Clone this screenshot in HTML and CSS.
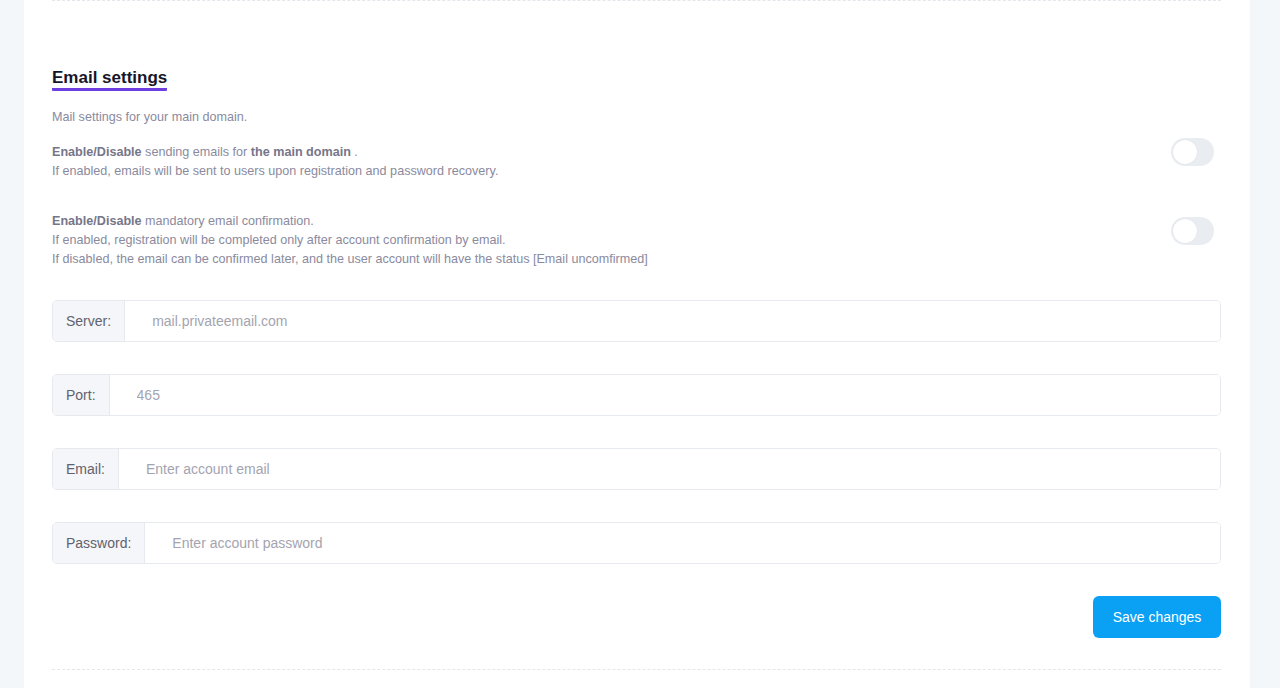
FILE: index.html
```html
<!DOCTYPE html>
<html lang="en">
<head>
  <meta charset="UTF-8">
  <title>Email settings</title>
  <meta name="viewport" content="width=device-width, initial-scale=1">
  <link rel="stylesheet" href="styles.css">
</head>
<body>

  <div class="card">
    <!-- Email settings -->
    <section class="settings">
      <h2 class="title">Email settings</h2>
      <p class="subtitle">Mail settings for your main domain.</p>

      <div class="option first">
        <div class="option-text">
          <b>Enable/Disable</b> sending emails for <b>the main domain</b> .<br>
          If enabled, emails will be sent to users upon registration and password recovery.
        </div>
        <label class="switch"><input type="checkbox"><span class="knob"></span></label>
      </div>

      <div class="option">
        <div class="option-text">
          <b>Enable/Disable</b> mandatory email confirmation.<br>
          If enabled, registration will be completed only after account confirmation by email.<br>
          If disabled, the email can be confirmed later, and the user account will have the status [Email uncomfirmed]
        </div>
        <label class="switch"><input type="checkbox"><span class="knob"></span></label>
      </div>

      <div class="input-group first-group">
        <span class="addon">Server:</span>
        <input type="text" placeholder="mail.privateemail.com">
      </div>
      <div class="input-group">
        <span class="addon">Port:</span>
        <input type="text" placeholder="465">
      </div>
      <div class="input-group">
        <span class="addon">Email:</span>
        <input type="text" placeholder="Enter account email">
      </div>
      <div class="input-group">
        <span class="addon">Password:</span>
        <input type="password" placeholder="Enter account password">
      </div>

      <div class="actions">
        <button class="btn-save">Save changes</button>
      </div>
    </section>
    <div class="divider"></div>
  </div>

</body>
</html>
```

FILE: styles.css
```css
body {
  margin: 0;
  background: #f4f7fa;
  font-family: "Liberation Sans", Arial, sans-serif;
}

.card {
  background: #fff;
  margin: 0 30px 0 24px;
  padding: 0 29px 20px 28px;
  min-height: 688px;
  box-sizing: border-box;
}

.settings {
  border-top: 1px dashed #e3e6eb;
  padding-top: 67px;
  padding-bottom: 31px;
}

.title {
  display: inline-block;
  margin: 0;
  font-size: 17px;
  line-height: 20px;
  font-weight: bold;
  color: #16162a;
  border-bottom: 3px solid #6d3fe0;
  border-radius: 1px;
}

.subtitle {
  margin: 17px 0 0;
  font-size: 12.6px;
  line-height: 19px;
  color: #8a8a9e;
}

/* Toggles */
.option {
  display: flex;
  justify-content: space-between;
  align-items: center;
  margin-top: 27px;
}

.option.first {
  margin-top: 11px;
}

.option-text {
  font-size: 12.6px;
  line-height: 19px;
  color: #8a8a9e;
}

.option-text b {
  color: #76768a;
}

.switch {
  position: relative;
  width: 43px;
  height: 28px;
  margin: 0 7px 19px 0;
  flex-shrink: 0;
}

.switch input {
  display: none;
}

.knob {
  display: block;
  width: 100%;
  height: 100%;
  border-radius: 14px;
  background: #e9edf2;
  cursor: pointer;
}

.knob::before {
  content: "";
  position: absolute;
  left: 2px;
  top: 2px;
  width: 24px;
  height: 24px;
  border-radius: 50%;
  background: #fff;
  box-shadow: 0 0 1px rgba(0,0,0,0.12);
}

/* Champs */
.input-group {
  display: flex;
  height: 42px;
  border: 1px solid #e6e9ee;
  border-radius: 5px;
  box-sizing: border-box;
  margin-top: 32px;
  overflow: hidden;
}

.input-group.first-group {
  margin-top: 31px;
}

.addon {
  display: flex;
  align-items: center;
  padding: 0 13px;
  background: #f4f6f9;
  border-right: 1px solid #e6e9ee;
  font-size: 14px;
  color: #62626e;
}

.input-group input {
  flex: 1;
  border: none;
  outline: none;
  padding: 0 0 0 27px;
  font-family: inherit;
  font-size: 14px;
  color: #555;
}

.input-group input::placeholder {
  color: #a4a4b0;
}

.actions {
  display: flex;
  justify-content: flex-end;
  margin-top: 32px;
}

.btn-save {
  width: 128px;
  height: 42px;
  border: none;
  border-radius: 6px;
  background: #0aa1f5;
  color: #fff;
  font-family: inherit;
  font-size: 14px;
  cursor: pointer;
}

.divider {
  border-top: 1px dashed #e3e6eb;
}
```
